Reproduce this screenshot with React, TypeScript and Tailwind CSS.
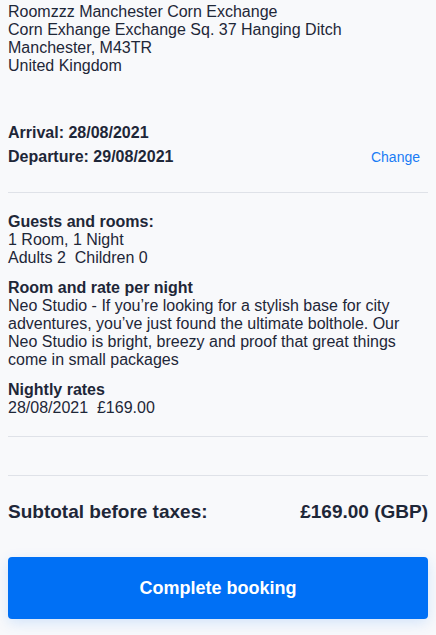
export default function App() {
  return (
    <div
      className="min-h-[635px] w-full bg-[#f8f9fb] px-2 text-[#1e2738]"
      style={{ fontFamily: '"Liberation Sans", Arial, sans-serif' }}
    >
      {/* Hotel address */}
      <div className="pt-[3px] text-[16px] leading-[18px]">
        <p>Roomzzz Manchester Corn Exchange</p>
        <p>Corn Exhange Exchange Sq. 37 Hanging Ditch</p>
        <p>Manchester, M43TR</p>
        <p>United Kingdom</p>
      </div>

      {/* Dates */}
      <div className="mt-[46px] pb-[23px] text-[16px] font-bold leading-6">
        <p>Arrival: 28/08/2021</p>
        <div className="flex items-center justify-between">
          <p>Departure: 29/08/2021</p>
          <button className="pr-2 text-[14px] font-normal text-[#1a7cf5]">Change</button>
        </div>
      </div>

      <div className="h-px bg-[#dfe2e8]" />

      {/* Details */}
      <div className="flex flex-col gap-3 pt-5 pb-[19px] text-[16px] leading-[18px]">
        <div>
          <p className="font-bold">Guests and rooms:</p>
          <p>1 Room, 1 Night</p>
          <p className="whitespace-pre">Adults 2  Children 0</p>
        </div>
        <div>
          <p className="font-bold">Room and rate per night</p>
          <p>
            Neo Studio - If you’re looking for a stylish base for city adventures, you’ve just found the
            ultimate bolthole. Our Neo Studio is bright, breezy and proof that great things come in small
            packages
          </p>
        </div>
        <div>
          <p className="font-bold">Nightly rates</p>
          <p className="whitespace-pre">28/08/2021  £169.00</p>
        </div>
      </div>

      <div className="h-px bg-[#dfe2e8]" />
      <div className="mt-[38px] h-px bg-[#dfe2e8]" />

      {/* Subtotal */}
      <div className="mt-6 flex items-center justify-between text-[19px] font-bold leading-6">
        <p>Subtotal before taxes:</p>
        <p>£169.00 (GBP)</p>
      </div>

      <button className="mt-[33px] h-[62px] w-full rounded-[4px] bg-[#0070f5] text-[18px] font-bold text-white shadow-[0_4px_14px_rgba(0,112,245,0.15)]">
        Complete booking
      </button>
    </div>
  );
}
